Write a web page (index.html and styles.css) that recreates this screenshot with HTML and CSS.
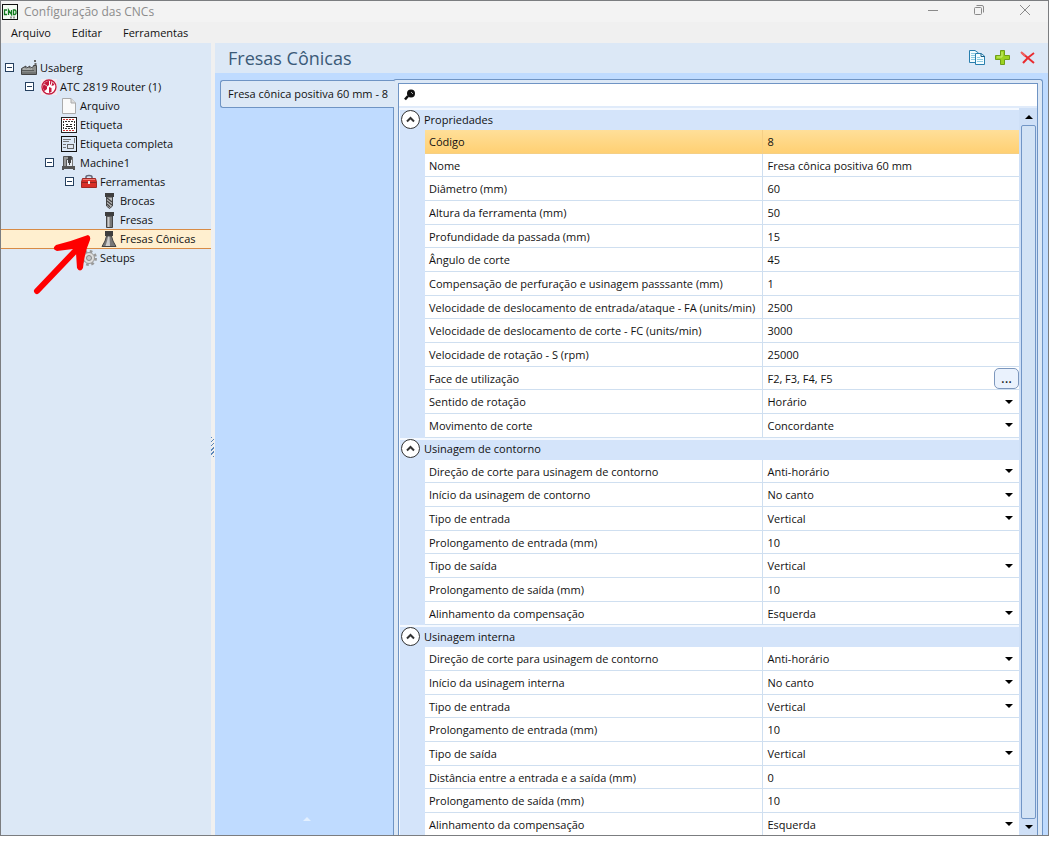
FILE: index.html
```html
<!DOCTYPE html>
<html lang="pt-BR">
<head>
    <meta charset="UTF-8">
    <meta name="viewport" content="width=device-width, initial-scale=1.0">
    <title>Configuração das CNCs</title>
    <link rel="stylesheet" href="styles.css">
</head>
<body>
<div class="window">
    <header class="titlebar">
        <svg class="app-icon" width="16" height="16" viewBox="0 0 16 16"><rect x=".5" y=".5" width="15" height="15" fill="#f4fbf4" stroke="#111"/><path d="M5 6H2.500V10.500H5M6.500 11V6L9.500 10.500V6M11.500 6V10.500H13L14 9.500V7L13 6Z" fill="none" stroke="#137a20" stroke-width="1.300"/><path d="M8 13.500H14" stroke="#999" stroke-width="2" stroke-dasharray="2 1"/></svg>
        <h1>Configuração das CNCs</h1>
        <div class="window-buttons">
            <button aria-label="Minimizar"><svg width="12" height="12" viewBox="0 0 12 12"><path d="M1 6.500H11"/></svg></button>
            <button aria-label="Restaurar"><svg width="12" height="12" viewBox="0 0 12 12"><rect x="1.500" y="3.500" width="7" height="7" rx="1"/><path d="M3.500 1.500H9Q10.500 1.500 10.500 3V8.500"/></svg></button>
            <button aria-label="Fechar"><svg width="12" height="12" viewBox="0 0 12 12"><path d="M1 1L11 11M11 1L1 11"/></svg></button>
        </div>
    </header>
    <nav class="menubar">
        <a href="#">Arquivo</a>
        <a href="#">Editar</a>
        <a href="#">Ferramentas</a>
    </nav>

    <div class="content">
        <aside class="tree">
            <div class="node level-0">
                <button class="toggle" aria-label="Recolher"></button>
                <svg width="16" height="16" viewBox="0 0 16 16"><path d="M.5 14.500V8.500L5 6V8.500L9 6V8.500L12.500 6.500V5.500H15.500V14.500Z" fill="#8b8d8b" stroke="#444"/><path d="M1 10.500H13M1 13H15" stroke="#5a5c5a"/><path d="M2 9H11" stroke="#c8cac8"/><path d="M14.500 5V3M14 2V0" stroke="#666" stroke-width="2"/></svg>
                <span>Usaberg</span>
            </div>
            <div class="node level-1">
                <button class="toggle" aria-label="Recolher"></button>
                <svg width="16" height="16" viewBox="0 0 16 16"><rect width="16" height="16" fill="#f4e9ef"/><circle cx="8" cy="8" r="7" fill="#fff" stroke="#c4183c" stroke-width="1.300"/><path d="M8 2A6 6 0 0 0 3.500 12L6 10V7.500L8 6ZM9 2L10.500 2.500 10 5 9 6ZM11.500 3L13.500 6 10.500 7ZM8 8L10.500 9V13L8 14Z" fill="#c4183c"/><path d="M3 5L6 7" stroke="#f0c4cf"/></svg>
                <span>ATC 2819 Router (1)</span>
            </div>
            <div class="node level-2">
                <svg width="16" height="16" viewBox="0 0 16 16"><path d="M1.500 .5H10L14.500 5V15.500H1.500Z" fill="#fafafa" stroke="#aaa"/><path d="M10 .5V5H14.500" fill="#ddd" stroke="#aaa"/></svg>
                <span>Arquivo</span>
            </div>
            <div class="node level-2">
                <svg width="16" height="16" viewBox="0 0 16 16"><rect x=".5" y=".5" width="15" height="15" fill="#fff" stroke="#222"/><path d="M2 2.500H14" stroke="#c33" stroke-dasharray="2 1"/><path d="M2.500 4V12M13.500 4V12M4 4.500H12M4 11.500H12" stroke="#333" stroke-dasharray="2 1"/><path d="M5 7.500H7M9 7.500H11M5 9.500H11" stroke="#222"/><path d="M2 13.500H14" stroke="#c33" stroke-dasharray="2 1"/></svg>
                <span>Etiqueta</span>
            </div>
            <div class="node level-2">
                <svg width="16" height="16" viewBox="0 0 16 16"><rect x=".5" y=".5" width="15" height="15" fill="#dce8f6" stroke="#111"/><path d="M2 3.500H10M2 5.500H8M2 8.500H5M2 11.500H5M13.500 2V7" stroke="#777"/><rect x="6.500" y="8.500" width="6" height="4" fill="#dfe6ef" stroke="#666"/></svg>
                <span>Etiqueta completa</span>
            </div>
            <div class="node level-2 branch">
                <button class="toggle" aria-label="Recolher"></button>
                <svg width="16" height="16" viewBox="0 0 16 16"><path d="M2.500 1.500H10.500V4.500H5.500V11.500H2.500Z" fill="#999" stroke="#555"/><path d="M6 5H12V12H6Z" fill="#e8edf3"/><path d="M8.500 1V8" stroke="#444" stroke-width="3"/><path d="M8.500 8V10" stroke="#444"/><path d="M11.500 2V11" stroke="#777"/><path d="M1 11H14V15H12V14H3V15H1Z" fill="#555"/></svg>
                <span>Machine1</span>
            </div>
            <div class="node level-3 branch">
                <button class="toggle" aria-label="Recolher"></button>
                <svg width="16" height="16" viewBox="0 0 16 16"><path d="M5 4V3Q5 1.500 8 1.500T11 3V4" fill="none" stroke="#667" stroke-width="1.500"/><path d="M1.500 4.500H14.500L15.500 8V13.500H.5V8Z" fill="#d92f28" stroke="#a02a26"/><path d="M2 5.500H14" stroke="#ee7e76"/><path d="M1 8.500H15" stroke="#8e2420"/><path d="M8 7V10" stroke="#eee" stroke-width="2"/></svg>
                <span>Ferramentas</span>
            </div>
            <div class="node level-4">
                <svg width="16" height="16" viewBox="0 0 16 16"><path d="M4 0H13V4H4Z" fill="#3e3e3e"/><path d="M5.500 4H11.500V13L8.500 15.500 5.500 13Z" fill="#bbb" stroke="#444"/><path d="M6 5L11 9M6 8L11 12M6 11L9 14" stroke="#444" stroke-width="1.300"/></svg>
                <span>Brocas</span>
            </div>
            <div class="node level-4">
                <svg width="16" height="16" viewBox="0 0 16 16"><path d="M4 0H13V4H4Z" fill="#3e3e3e"/><path d="M5.500 4H11.500V15.500H5.500Z" fill="#777" stroke="#444"/><path d="M7.500 5V15" stroke="#ccc" stroke-width="2"/></svg>
                <span>Fresas</span>
            </div>
            <div class="node level-4 selected">
                <svg width="16" height="16" viewBox="0 0 16 16"><path d="M4 0H12V5H4Z" fill="#3e3e3e"/><path d="M5.500 5H10.500L12 10 15 15.500H1L4 10Z" fill="#777" stroke="#444"/><path d="M7 5.500L6 10 4.500 15H9L8.500 5.500Z" fill="#ccc"/></svg>
                <span>Fresas Cônicas</span>
            </div>
            <div class="node level-3">
                <svg width="16" height="16" viewBox="0 0 16 16"><circle cx="8" cy="8" r="6.500" fill="none" stroke="#999" stroke-width="3" stroke-dasharray="2.550 2.550"/><circle cx="8" cy="8" r="5.500" fill="#ddd" stroke="#999"/><circle cx="8" cy="8" r="2.500" fill="#c4c8cc" stroke="#888"/></svg>
                <span>Setups</span>
            </div>
            <svg class="pointer" width="60" height="62" viewBox="0 0 60 62"><path d="M4 58L45 15" stroke="#f00" stroke-width="6" stroke-linecap="round"/><path d="M55 2Q58 3 57 7Q51 21 50 35Q47 40 44 35L43 20L40 16L24 18Q18 16 23 12Q39 8 55 2Z" fill="#f00"/></svg>
        </aside>

        <div class="splitter"><span></span></div>

        <main class="pane">
            <div class="pane-header">
                <h2>Fresas Cônicas</h2>
                <div class="actions">
                    <button aria-label="Copiar"><svg width="18" height="16" viewBox="0 0 18 16"><path d="M1.500 .5H7L10.500 3V12.500H1.500Z" fill="#f3fcff" stroke="#297fae"/><path d="M3 3.500H7M3 5.500H8M3 7.500H7M3 9.500H7" stroke="#8ecbe2"/><path d="M7.500 3.500H13L16.500 6V14.500H7.500Z" fill="#f3fcff" stroke="#297fae"/><path d="M13 3.500V6.500H16.500" fill="none" stroke="#155d85"/><path d="M9 7.500H12M9 9.500H15M9 11.500H15" stroke="#8ecbe2"/></svg></button>
                    <button aria-label="Adicionar"><svg width="16" height="16" viewBox="0 0 16 16"><path d="M5.500 .5H9.500V5.500H14.500V9.500H9.500V14.500H5.500V9.500H.5V5.500H5.500Z" fill="#9bd322" stroke="#6f9f1a"/><path d="M7 2V7H2" fill="none" stroke="#cbee78"/></svg></button>
                    <button aria-label="Excluir"><svg width="16" height="16" viewBox="0 0 16 16"><path d="M2 3L14 13M14 3Q8 7 3 13" fill="none" stroke="#e92b2f" stroke-width="2"/><path d="M1 2L5 6" stroke="#f0605f" stroke-width="2"/></svg></button>
                </div>
            </div>

            <div class="workspace">
                <div class="tabs">
                    <button class="tab">Fresa cônica positiva 60 mm - 8</button>
                    <span class="expander"></span>
                </div>
                <div class="panel">
                    <div class="panel-inner">
                        <div class="search">
                            <label for="search" aria-label="Pesquisar"><svg width="12" height="12" viewBox="0 0 12 12"><circle cx="7" cy="4.500" r="4" fill="#111"/><path d="M4 7L1 10.500" stroke="#111" stroke-width="2.500"/><path d="M7 3L9 5" stroke="#aaa"/></svg></label>
                            <input id="search" type="text">
                        </div>
                        <div class="grid-area">
                            <form class="properties" id="properties"></form>
                            <div class="scrollbar">
                                <span class="arrow up"></span>
                                <span class="thumb"></span>
                                <span class="arrow"></span>
                            </div>
                        </div>
                    </div>
                </div>
            </div>
        </main>
    </div>
</div>
<script src="script.js"></script>
</body>
</html>
```
FILE: styles.css
```css
* {
    box-sizing: border-box;
}
body {
    margin: 0;
    background: #fff;
    color: #111;
    font-family: "Open Sans", "Noto Sans", sans-serif;
    font-size: 11px;
    display: flex;
    min-height: 100vh;
}
button, input, select {
    font: inherit;
    color: inherit;
    border: none;
    background: none;
    padding: 0;
    margin: 0;
}
svg {
    display: block;
    flex: none;
}
.window {
    flex: 1;
    display: flex;
    flex-direction: column;
    margin: 0 7px 7px 0;
    border: 1px solid #7b7d80;
    background: #f0f0f0;
    overflow: hidden;
}
.titlebar {
    display: flex;
    align-items: center;
    height: 21px;
    padding-left: 1px;
    background: #f3f3f3;
    color: #8c8c8c;
}
.titlebar h1 {
    flex: 1;
    margin: 0 0 0 6px;
    font-size: 12px;
    font-weight: normal;
}
.window-buttons {
    display: flex;
    padding-bottom: 3px;
}
.window-buttons button {
    display: flex;
    justify-content: center;
    width: 46px;
}
.window-buttons svg {
    fill: none;
    stroke: #8a8a8a;
}
.menubar {
    display: flex;
    align-items: center;
    gap: 21px;
    height: 21px;
    padding-left: 10px;
}
.menubar a {
    color: #111;
    text-decoration: none;
}
.content {
    flex: 1;
    display: flex;
}
.tree {
    position: relative;
    width: 210px;
    padding-top: 15px;
    background: #dce8f6;
}
.node {
    display: flex;
    align-items: center;
    gap: 3px;
    height: 19px;
    border: 1px solid transparent;
    border-width: 1px 0;
    white-space: nowrap;
}
.level-0 {
    padding-left: 4px;
}
.level-1 {
    padding-left: 24px;
}
.level-2 {
    padding-left: 60px;
}
.level-2.branch {
    padding-left: 44px;
}
.level-3 {
    padding-left: 80px;
}
.level-3.branch {
    padding-left: 64px;
}
.level-4 {
    padding-left: 100px;
}
.selected {
    height: 20px;
    margin-bottom: -1px;
    padding-bottom: 1px;
    background: #ffefcf;
    border-color: #d88b45;
}
.toggle {
    width: 9px;
    height: 9px;
    margin-right: 4px;
    border: 1px solid #26405f;
    background: linear-gradient(#26405f, #26405f) center / 5px 1px no-repeat #fff;
}
.pointer {
    position: absolute;
    left: 32px;
    top: 190px;
}
.splitter {
    display: flex;
    align-items: center;
    width: 4px;
    padding-top: 16px;
}
.splitter span {
    width: 3px;
    height: 20px;
    background: repeating-linear-gradient(135deg, #5b86b8 0 1px, #f0f0f0 1px 3px);
}
.pane {
    flex: 1;
    display: flex;
    flex-direction: column;
    min-width: 0;
    background: #bfdbff;
}
.pane-header {
    display: flex;
    align-items: center;
    justify-content: space-between;
    height: 30px;
    padding: 0 12px 0 13px;
    background: #dce8f6;
}
.pane-header h2 {
    margin: 0;
    font-size: 18px;
    font-weight: normal;
    color: #3b5a78;
}
.actions {
    display: flex;
    gap: 9px;
}
.workspace {
    flex: 1;
    display: flex;
    padding: 6px 5px 0;
}
.tabs {
    display: flex;
    flex-direction: column;
    justify-content: space-between;
    align-items: center;
    width: 173px;
    padding-top: 1px;
}
.tab {
    align-self: stretch;
    height: 28px;
    margin-right: -1px;
    padding: 0 7px 2px;
    border: 1px solid #6f94c4;
    border-right: none;
    border-radius: 3px 0 0 3px;
    background: #dce8f6;
    text-align: left;
    white-space: nowrap;
    z-index: 1;
}
.expander {
    margin-bottom: 14px;
    border: 4px solid transparent;
    border-top: none;
    border-bottom-color: #e3f0ff;
}
.panel {
    flex: 1;
    display: flex;
    min-width: 0;
    padding: 3px 4px 0;
    border: 1px solid #6f94c4;
    border-bottom: none;
    border-radius: 3px 3px 0 0;
    background: #dce8f6;
}
.panel-inner {
    flex: 1;
    display: flex;
    flex-direction: column;
    min-width: 0;
    border: 1px solid #6f94c4;
    border-bottom: none;
    background: #d4e4fa;
}
.search {
    display: flex;
    align-items: center;
    height: 24px;
    padding-left: 5px;
    border-bottom: 2px solid #e0ebfa;
    background: #fff;
}
.search input {
    flex: 1;
    height: 20px;
    margin-left: 6px;
    outline: none;
}
.grid-area {
    flex: 1;
    display: flex;
    min-height: 0;
}
.properties {
    flex: 1;
    display: flex;
    flex-direction: column;
    min-width: 0;
    margin-bottom: -2px;
    padding-left: 1px;
    background: #f5f9ff;
}
.group-title {
    display: flex;
    align-items: center;
    gap: 4px;
    height: 22px;
    margin: 0;
    padding: 0 0 2px 1px;
    border-top: 2px solid #f5f9ff;
    background: #d4e4fa;
    font-size: 11px;
    font-weight: normal;
}
.collapse {
    display: flex;
    align-items: center;
    justify-content: center;
    width: 19px;
    height: 19px;
    border: 1px solid #333;
    border-radius: 50%;
    background: #fff;
}
.row {
    flex: 1;
    display: flex;
    min-height: 20px;
    padding-left: 25px;
    background: #d4e4fa;
}
.row label, .value {
    display: flex;
    align-items: center;
    border-bottom: 1px solid #cfdff0;
    background: #fff;
}
.row label {
    flex: 57;
    padding-left: 4px;
    border-right: 1px solid #cfdff0;
    white-space: nowrap;
}
.value {
    position: relative;
    flex: 43;
    padding-left: 4px;
}
.value input, .value select {
    flex: 1;
    min-width: 0;
    appearance: none;
    outline: none;
}
.value.dropdown::after {
    content: "";
    position: absolute;
    right: 6px;
    border: 4px solid transparent;
    border-top-color: #000;
    border-bottom: none;
    pointer-events: none;
}
.row.active label, .row.active .value {
    background: linear-gradient(#ffdf99, #ffd073);
    border-color: #f5cf85;
}
.more {
    width: 25px;
    height: 21px;
    border: 1px solid #7d97bd;
    border-radius: 5px;
    background: #eaf2fd;
    font-size: 14px;
    line-height: 16px;
}
.scrollbar {
    display: flex;
    flex-direction: column;
    align-items: center;
    gap: 6px;
    width: 18px;
    padding: 7px 1px 6px 2px;
    background: #cfe0f7;
}
.thumb {
    flex: 1;
    align-self: stretch;
    border: 1px solid #7296c6;
    border-radius: 2px;
    background: #d3e3f5;
}
.arrow {
    border: 4px solid transparent;
    border-top-color: #000;
    border-bottom: none;
}
.arrow.up {
    border-top: none;
    border-bottom: 4px solid #000;
}
```
FILE: script.js
```js
// Each field: label, value, type (text when omitted)
const groups = [
    {
        title: "Propriedades",
        fields: [
            ["Código", "8"],
            ["Nome", "Fresa cônica positiva 60 mm"],
            ["Diâmetro (mm)", "60"],
            ["Altura da ferramenta (mm)", "50"],
            ["Profundidade da passada (mm)", "15"],
            ["Ângulo de corte", "45"],
            ["Compensação de perfuração e usinagem passsante (mm)", "1"],
            ["Velocidade de deslocamento de entrada/ataque - FA (units/min)", "2500"],
            ["Velocidade de deslocamento de corte - FC (units/min)", "3000"],
            ["Velocidade de rotação - S (rpm)", "25000"],
            ["Face de utilização", "F2, F3, F4, F5", "more"],
            ["Sentido de rotação", "Horário", "select"],
            ["Movimento de corte", "Concordante", "select"]
        ]
    },
    {
        title: "Usinagem de contorno",
        fields: [
            ["Direção de corte para usinagem de contorno", "Anti-horário", "select"],
            ["Início da usinagem de contorno", "No canto", "select"],
            ["Tipo de entrada", "Vertical", "select"],
            ["Prolongamento de entrada (mm)", "10"],
            ["Tipo de saída", "Vertical", "select"],
            ["Prolongamento de saída (mm)", "10"],
            ["Alinhamento da compensação", "Esquerda", "select"]
        ]
    },
    {
        title: "Usinagem interna",
        fields: [
            ["Direção de corte para usinagem de contorno", "Anti-horário", "select"],
            ["Início da usinagem interna", "No canto", "select"],
            ["Tipo de entrada", "Vertical", "select"],
            ["Prolongamento de entrada (mm)", "10"],
            ["Tipo de saída", "Vertical", "select"],
            ["Distância entre a entrada e a saída (mm)", "0"],
            ["Prolongamento de saída (mm)", "10"],
            ["Alinhamento da compensação", "Esquerda", "select"]
        ]
    }
];

let html = "";
groups.forEach((group, g) => {
    html += `<h3 class="group-title"><button type="button" class="collapse" aria-label="Recolher"><svg width="9" height="7" viewBox="0 0 9 7"><path d="M1 5.500L4.500 2L8 5.500" fill="none" stroke="#333" stroke-width="2"/></svg></button>${group.title}</h3>`;
    group.fields.forEach(([label, value, type], f) => {
        const id = `field-${g}-${f}`;
        const active = g === 0 && f === 0 ? " active" : "";
        let control = `<input type="text" id="${id}" value="${value}">`;
        if (type === "select") {
            control = `<select id="${id}"><option>${value}</option></select>`;
        }
        if (type === "more") {
            control += `<button type="button" class="more" aria-label="Escolher faces">...</button>`;
        }
        html += `<div class="row${active}"><label for="${id}">${label}</label><div class="value${type === "select" ? " dropdown" : ""}">${control}</div></div>`;
    });
});
document.getElementById("properties").innerHTML = html;
```
